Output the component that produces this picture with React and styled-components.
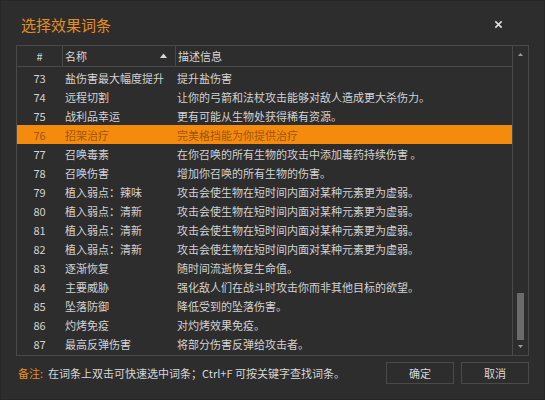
import React from 'react'
import styled, { createGlobalStyle } from 'styled-components'

const GlobalStyle = createGlobalStyle`
  html, body {
    margin: 0;
    padding: 0;
    background: #2b2b2b;
  }
  * { box-sizing: border-box; }
`

const rows = [
  [73, '盐伤害最大幅度提升', '提升盐伤害'],
  [74, '远程切割', '让你的弓箭和法杖攻击能够对敌人造成更大杀伤力。'],
  [75, '战利品幸运', '更有可能从生物处获得稀有资源。'],
  [76, '招架治疗', '完美格挡能为你提供治疗'],
  [77, '召唤毒素', '在你召唤的所有生物的攻击中添加毒药持续伤害 。'],
  [78, '召唤伤害', '增加你召唤的所有生物的伤害。'],
  [79, '植入弱点：辣味', '攻击会使生物在短时间内面对某种元素更为虚弱。'],
  [80, '植入弱点：清新', '攻击会使生物在短时间内面对某种元素更为虚弱。'],
  [81, '植入弱点：清新', '攻击会使生物在短时间内面对某种元素更为虚弱。'],
  [82, '植入弱点：清新', '攻击会使生物在短时间内面对某种元素更为虚弱。'],
  [83, '逐渐恢复', '随时间流逝恢复生命值。'],
  [84, '主要威胁', '强化敌人们在战斗时攻击你而非其他目标的欲望。'],
  [85, '坠落防御', '降低受到的坠落伤害。'],
  [86, '灼烤免疫', '对灼烤效果免疫。'],
  [87, '最高反弹伤害', '将部分伤害反弹给攻击者。'],
]

function App() {
  return (
    <>
      <GlobalStyle />
      <Dialog>
        <TitleBar>
          <Title>选择效果词条</Title>
          <CloseButton>
            <svg width="9" height="9" viewBox="0 0 10 10">
              <path d="M1.5 1.5 L8.5 8.5 M8.5 1.5 L1.5 8.5" stroke="#e0e0e0" strokeWidth="1.7" />
            </svg>
          </CloseButton>
        </TitleBar>
        <TableBox>
          <ListArea>
            <Header>
              <HeadCell $w={45} $center>#</HeadCell>
              <HeadCell $w={113} $sep>
                名称
                <SortArrow>
                  <svg width="7" height="5" viewBox="0 0 7 5">
                    <path d="M0 5 L3.5 0.5 L7 5 Z" fill="#d8d8d8" />
                  </svg>
                </SortArrow>
              </HeadCell>
              <HeadCell $sep $grow>描述信息</HeadCell>
            </Header>
            {rows.map(([id, name, desc]) => (
              <Row key={id} $active={id === 76}>
                <Cell $w={45} $center>{id}</Cell>
                <Cell $w={113}>{name}</Cell>
                <Cell $grow>{desc}</Cell>
              </Row>
            ))}
          </ListArea>
          <Scrollbar>
            <svg width="5" height="3" viewBox="0 0 5 3">
              <path d="M0 3 L2.5 0 L5 3 Z" fill="#9a9a9a" />
            </svg>
            <Track>
              <Thumb />
            </Track>
            <svg width="5" height="3" viewBox="0 0 5 3">
              <path d="M0 0 L2.5 3 L5 0 Z" fill="#9a9a9a" />
            </svg>
          </Scrollbar>
        </TableBox>
        <Footer>
          <Note>
            <NoteLabel>备注:</NoteLabel>
            在词条上双击可快速选中词条；Ctrl+F 可按关键字查找词条。
          </Note>
          <Buttons>
            <Button>确定</Button>
            <Button>取消</Button>
          </Buttons>
        </Footer>
      </Dialog>
    </>
  )
}

export default App

const font = `"Noto Sans CJK SC", "Noto Sans", sans-serif`

const Dialog = styled.div`
width: 545px;
height: 400px;
background: #2d2d2d;
border: 1px solid #262626;
display: flex;
flex-direction: column;
font-family: ${font};
color: #d6d6d6;
`

const TitleBar = styled.div`
height: 44px;
display: flex;
align-items: center;
justify-content: space-between;
padding: 2px 41px 0 20px;
`

const Title = styled.div`
font-size: 15px;
color: #e58d24;
`

const CloseButton = styled.div`
display: flex;
align-items: center;
cursor: pointer;
`

const TableBox = styled.div`
margin: 0 15px;
height: 311px;
border: 1px solid #4a4a4a;
display: flex;
`

const ListArea = styled.div`
flex: 1;
display: flex;
flex-direction: column;
overflow: hidden;
`

const Header = styled.div`
height: 21px;
flex-shrink: 0;
display: flex;
border-bottom: 1px solid #4a4a4a;
margin-bottom: 1px;
`

const HeadCell = styled.div`
position: relative;
${p => p.$w ? `width: ${p.$w}px;` : ''}
${p => p.$grow ? 'flex: 1;' : ''}
display: flex;
align-items: center;
justify-content: ${p => p.$center ? 'center' : 'flex-start'};
padding-left: ${p => p.$center ? 0 : 2}px;
${p => p.$sep ? 'border-left: 1px solid #4a4a4a;' : ''}
font-size: 11px;
color: #d6d6d6;
`

const SortArrow = styled.span`
position: absolute;
right: 8px;
top: 7px;
display: flex;
`

const Row = styled.div`
height: 19px;
flex-shrink: 0;
display: flex;
align-items: center;
background: ${p => p.$active ? '#f58b0c' : 'transparent'};
color: ${p => p.$active ? '#9e5510' : '#d2d2d2'};
`

const Cell = styled.div`
${p => p.$w ? `width: ${p.$w}px;` : ''}
${p => p.$grow ? 'flex: 1;' : ''}
text-align: ${p => p.$center ? 'center' : 'left'};
padding-left: ${p => p.$center ? 0 : 2}px;
font-size: 11px;
white-space: nowrap;
overflow: hidden;
&:nth-child(2) { padding-left: 3px; }
`

const Scrollbar = styled.div`
width: 16px;
border-left: 1px solid #4a4a4a;
display: flex;
flex-direction: column;
align-items: center;
padding: 7px 0 7px;
`

const Track = styled.div`
flex: 1;
width: 100%;
display: flex;
flex-direction: column;
justify-content: flex-end;
align-items: center;
padding: 0 0 5px;
`

const Thumb = styled.div`
width: 7px;
height: 47px;
background: #6a6a6a;
`

const Footer = styled.div`
display: flex;
align-items: center;
justify-content: space-between;
padding: 6px 15px 0 17px;
`

const Note = styled.div`
font-size: 11px;
color: #d6d6d6;
`

const NoteLabel = styled.span`
color: #e58d24;
margin-right: 5px;
`

const Buttons = styled.div`
display: flex;
gap: 7px;
`

const Button = styled.div`
width: 68px;
height: 22px;
border: 1px solid #4a4a4a;
display: flex;
align-items: center;
justify-content: center;
font-size: 11px;
color: #d6d6d6;
cursor: pointer;
`
